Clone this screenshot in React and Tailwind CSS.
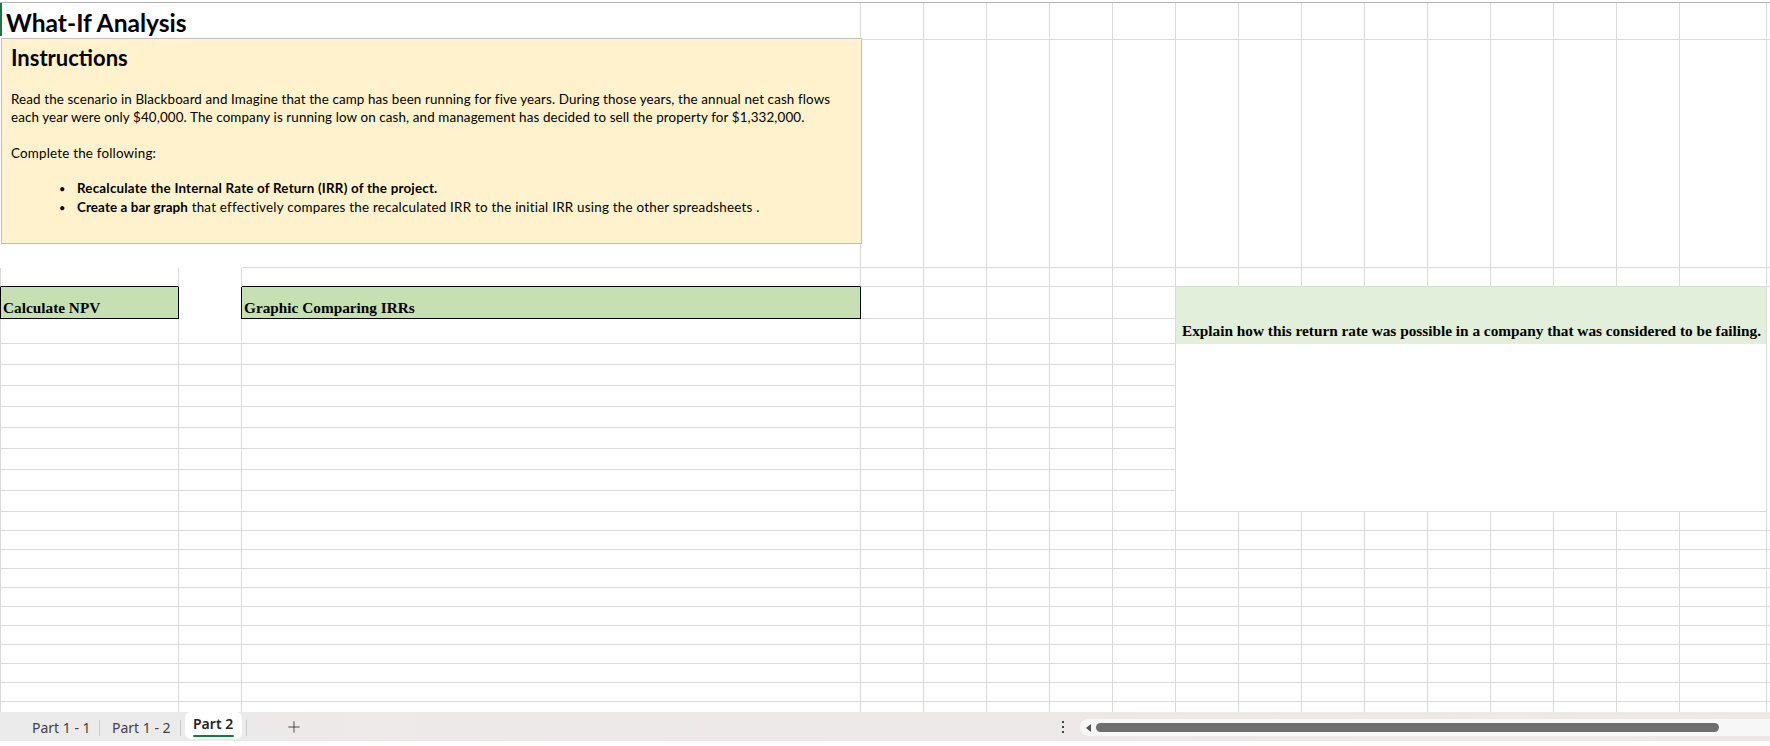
import React from 'react';
import { Plus } from 'lucide-react';

// cells from column D to the right edge (starts at x=861)
const RightCells = () => (
    <>
        {Array.from({ length: 13 }).map((_, i) => (
            <div key={i} className="w-[63px] shrink-0 border-r border-b border-[#dadada]" />
        ))}
        <div className="w-[87px] shrink-0 border-r border-b border-[#dadada]" />
        <div className="flex-1 border-b border-[#dadada]" />
    </>
);

// columns D..H (861 - 1175)
const FiveCells = () => (
    <>
        {Array.from({ length: 5 }).map((_, i) => (
            <div key={i} className="w-[63px] shrink-0 border-r border-b border-[#dadada]" />
        ))}
    </>
);

const Abc = () => (
    <>
        <div className="w-[179px] shrink-0 border-l border-r border-b border-[#dadada]" />
        <div className="w-[63px] shrink-0 border-r border-b border-[#dadada]" />
        <div className="w-[619px] shrink-0 border-r border-b border-[#dadada]" />
    </>
);

const Separator = () => <div className="w-px h-[16px] mt-[8px] bg-[#c8c8c8] shrink-0" />;

const App = () => {
    return (
        <div className="w-[1770px] h-[746px] overflow-hidden bg-white flex flex-col">
            {/* sheet */}
            <div className="h-[712px] shrink-0 overflow-hidden flex flex-col">
                <div className="h-[3px] shrink-0 border-b border-[#b4b4b4]" />

                {/* title + instructions */}
                <div className="flex h-[265px] shrink-0">
                    <div className="w-[861px] shrink-0 flex flex-col font-['Lato',sans-serif] text-black">
                        <div className="relative h-[35px] shrink-0 border-r border-[#dadada] pl-[6px] pt-[5px]">
                            <div className="absolute left-0 top-0 w-[2px] h-[33px] bg-[#217346]" />
                            <h1 className="text-[24.6px] leading-[29px] font-bold whitespace-nowrap">What-If Analysis</h1>
                        </div>

                        <div className="ml-[1px] w-[861px] h-[206px] shrink-0 border border-[#bfbfbf] bg-[#fff2cc] pl-[9px] pt-[6px]">
                            <h2 className="text-[22px] leading-[25px] font-bold">Instructions</h2>
                            <p className="mt-[20px] text-[13.4px] leading-[18px] tracking-[0.12px] whitespace-nowrap">
                                Read the scenario in Blackboard and Imagine that the camp has been running for five years. During those years, the annual net cash flows
                                <br />
                                each year were only $40,000. The company is running low on cash, and management has decided to sell the property for $1,332,000.
                            </p>
                            <p className="mt-[18px] text-[13.4px] leading-[18px] tracking-[0.2px]">Complete the following:</p>
                            <ul className="mt-[17px] text-[13.4px] leading-[19px] whitespace-nowrap">
                                <li className="flex items-baseline pl-[48px]">
                                    <span className="w-[18px] shrink-0 text-[11px]">•</span>
                                    <span className="font-bold tracking-[0.2px]">Recalculate the Internal Rate of Return (IRR) of the project.</span>
                                </li>
                                <li className="flex items-baseline pl-[48px]">
                                    <span className="w-[18px] shrink-0 text-[11px]">•</span>
                                    <span className="tracking-[0.23px]">
                                        <b className="tracking-[0.1px]">Create a bar graph</b> that effectively compares the recalculated IRR to the initial IRR using the other spreadsheets .
                                    </span>
                                </li>
                            </ul>
                        </div>

                        <div className="flex h-[24px] shrink-0">
                            <div className="w-[242px] shrink-0" />
                            <div className="w-[619px] shrink-0 border-r border-b border-[#dadada]" />
                        </div>
                    </div>

                    <div className="flex-1 flex flex-col">
                        <div className="flex h-[37px] shrink-0">
                            <RightCells />
                        </div>
                        <div className="flex h-[228px] shrink-0">
                            <RightCells />
                        </div>
                    </div>
                </div>

                {/* row above headings */}
                <div className="flex h-[19px] shrink-0">
                    <div className="w-[179px] shrink-0 border-l border-r border-b border-l-[#dadada] border-r-[#dadada] border-b-black" />
                    <div className="w-[63px] shrink-0 border-r border-[#dadada]" />
                    <div className="w-[619px] shrink-0 border-r border-b border-r-[#dadada] border-b-black" />
                    <RightCells />
                </div>

                {/* headings, explain band, merged answer area */}
                <div className="flex shrink-0 font-['Liberation_Serif',serif] font-bold text-black text-[15.3px]">
                    <div className="w-[1176px] shrink-0 flex flex-col">
                        <div className="flex h-[32px]">
                            <div className="w-[179px] shrink-0 border-l border-r border-b border-black bg-[#c6e0b4] flex items-end pl-[2px] pb-[2px]">
                                <span className="leading-[17px] whitespace-nowrap">Calculate NPV</span>
                            </div>
                            <div className="w-[63px] shrink-0 border-r border-black" />
                            <div className="w-[619px] shrink-0 border-r border-b border-black bg-[#c6e0b4] flex items-end pl-[2px] pb-[2px]">
                                <span className="leading-[17px] whitespace-nowrap">Graphic Comparing IRRs</span>
                            </div>
                            <FiveCells />
                        </div>
                        <div className="flex h-[25px]">
                            <Abc />
                            <FiveCells />
                        </div>
                        {Array.from({ length: 8 }).map((_, i) => (
                            <div key={i} className="flex h-[21px]">
                                <Abc />
                                <FiveCells />
                            </div>
                        ))}
                    </div>

                    <div className="w-[591px] shrink-0 flex flex-col border-r border-[#dadada]">
                        <div className="h-[57px] shrink-0 bg-[#e2efda] flex items-end pl-[6px] pb-[5px]">
                            <span className="leading-[17px] whitespace-nowrap">
                                Explain how this return rate was possible in a company that was considered to be failing.
                            </span>
                        </div>
                        <div className="flex-1 border-b border-[#dadada]" />
                    </div>
                    <div className="flex-1" />
                </div>

                {/* plain rows */}
                {Array.from({ length: 11 }).map((_, i) => (
                    <div key={i} className="flex h-[19px] shrink-0">
                        <Abc />
                        <RightCells />
                    </div>
                ))}
            </div>

            {/* sheet tabs */}
            <div className="h-[29px] shrink-0 flex bg-gradient-to-r from-[#ebebeb] to-[#eee7e5] font-['Noto_Sans',sans-serif] text-[14px] text-[#424242]">
                <div className="w-[1053px] shrink-0 flex">
                    <div className="w-[99px] shrink-0 pl-[32px] pt-[6px] leading-[19px] whitespace-nowrap">Part 1 - 1</div>
                    <Separator />
                    <div className="w-[80px] shrink-0 pl-[12px] pt-[6px] leading-[19px] whitespace-nowrap">Part 1 - 2</div>
                    <Separator />
                    <div className="ml-[4px] w-[57px] h-[27px] shrink-0 bg-white rounded-[6px] pl-[8px] pt-[2px] flex flex-col">
                        <span className="font-semibold leading-[19px] text-[#242424] whitespace-nowrap">Part 2</span>
                        <span className="w-[41px] h-[2px] rounded-full bg-[#107c41] mt-[2px]" />
                    </div>
                    <div className="ml-[4px] flex">
                        <Separator />
                    </div>
                    <div className="ml-[38px] mt-[6px] text-[#3b3b3b]">
                        <Plus size={18} strokeWidth={1.2} />
                    </div>
                </div>

                <div className="w-[20px] shrink-0 flex flex-col items-center justify-center gap-[3px]">
                    <span className="w-[2px] h-[2px] bg-[#444]" />
                    <span className="w-[2px] h-[2px] bg-[#444]" />
                    <span className="w-[2px] h-[2px] bg-[#444]" />
                </div>

                <div className="ml-[7px] mt-[7px] h-[17px] flex-1 bg-[#f7f7f7] rounded-l-[9px] flex items-center pl-[6px]">
                    <svg width="5" height="8" viewBox="0 0 5 8">
                        <polygon points="5,0 5,8 0,4" fill="#555" />
                    </svg>
                    <div className="ml-[5px] w-[623px] h-[9px] rounded-full bg-[#6e6e6e]" />
                </div>
            </div>
            <div className="h-[5px] shrink-0 bg-white" />
        </div>
    );
};

export default App;
